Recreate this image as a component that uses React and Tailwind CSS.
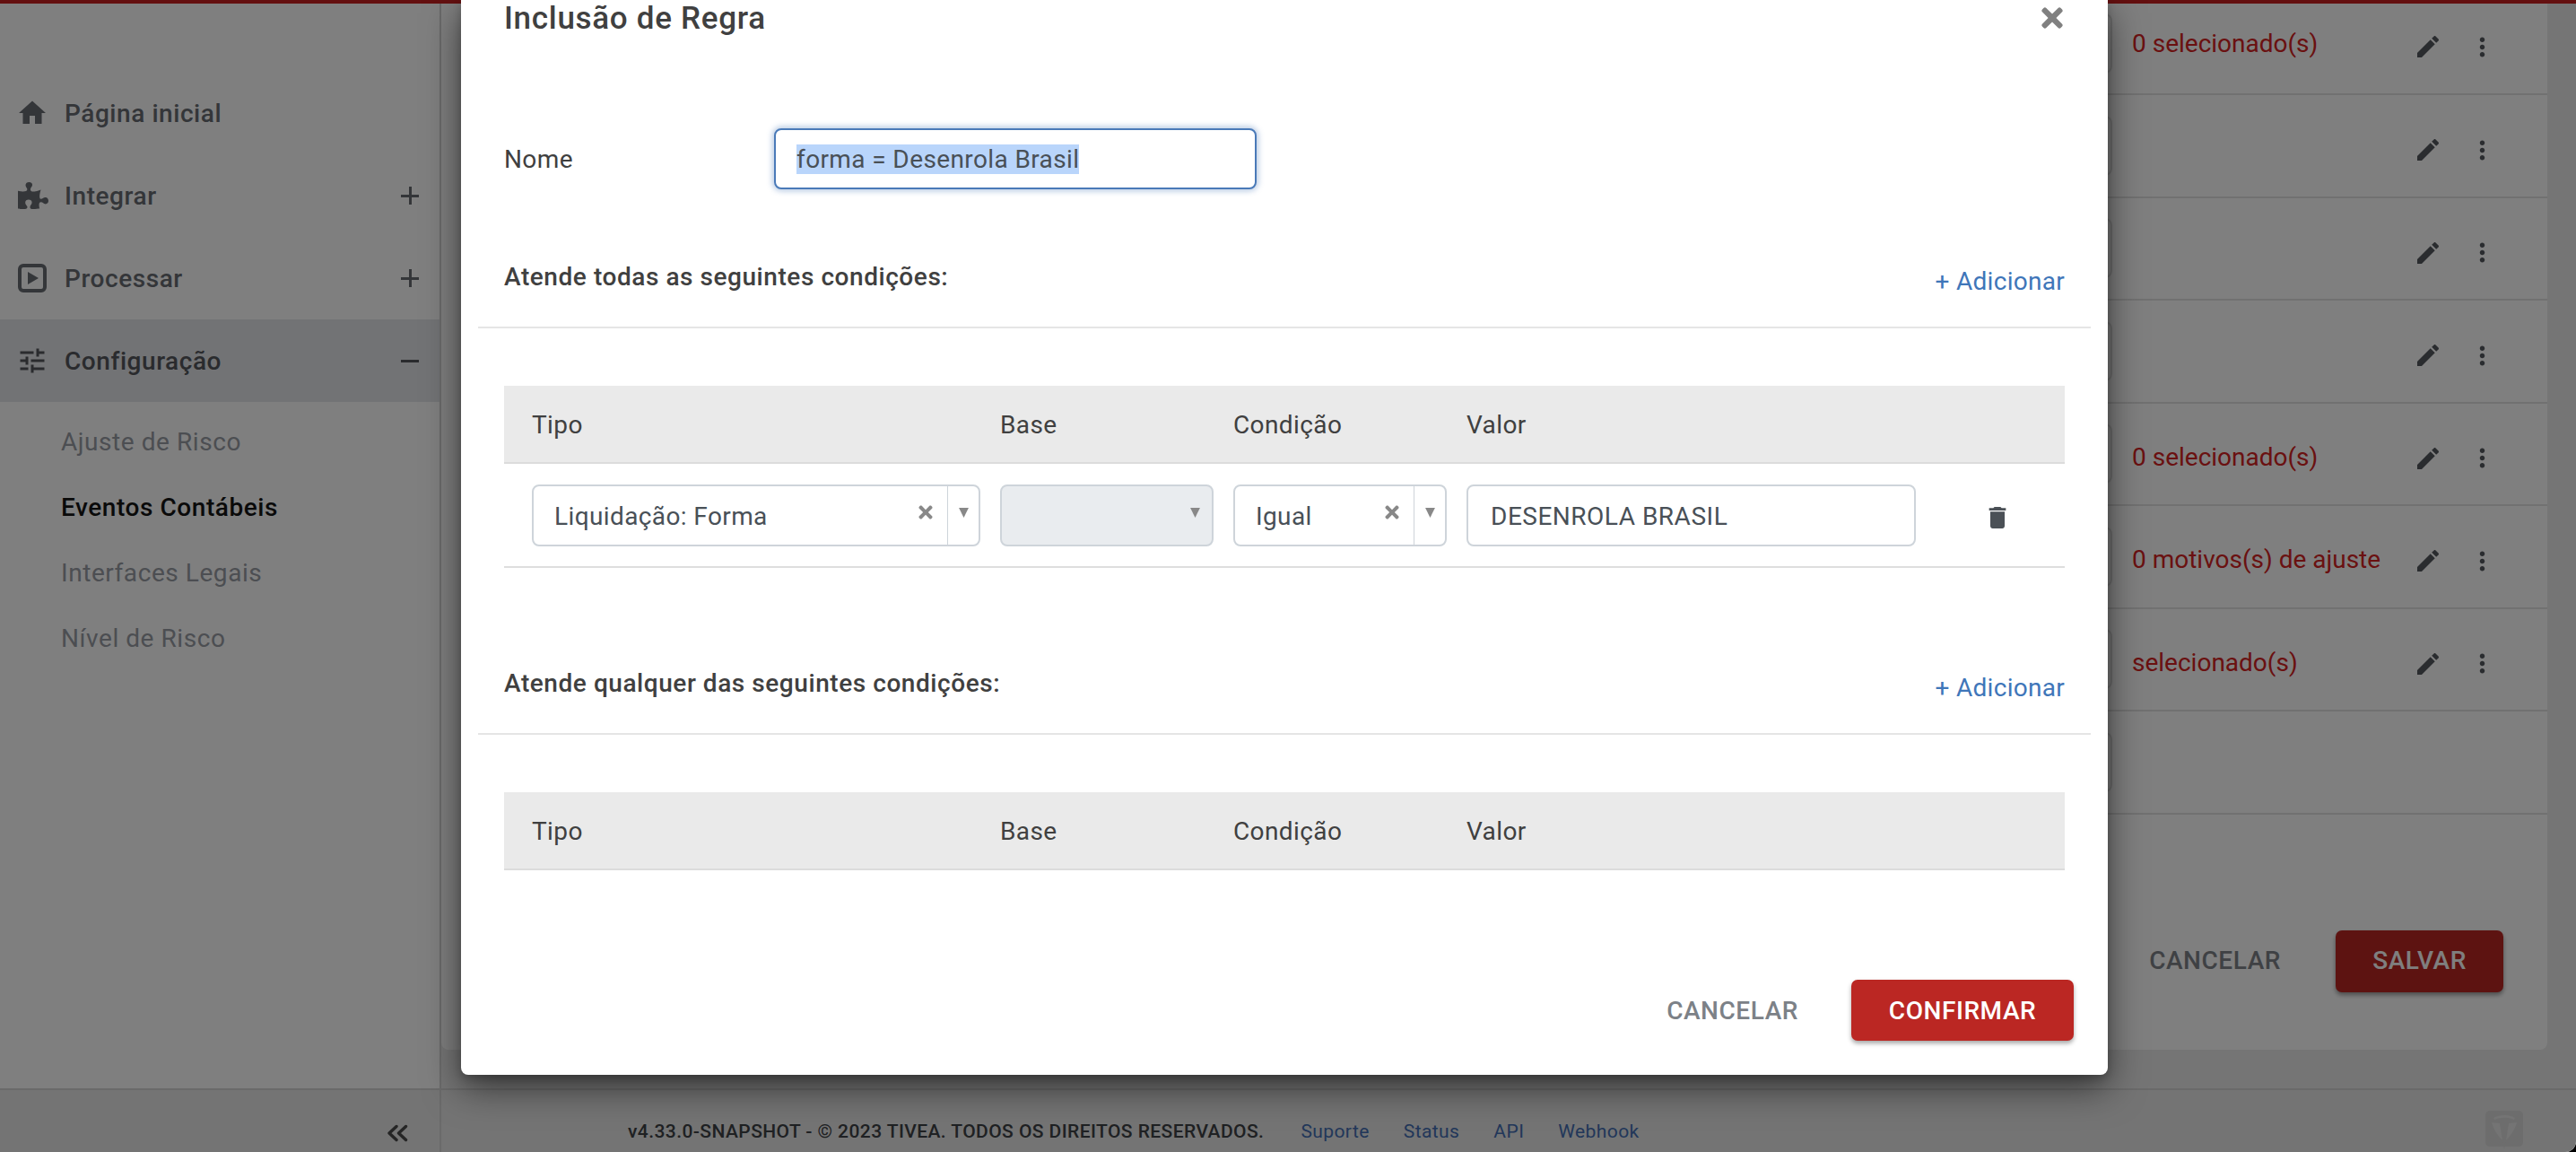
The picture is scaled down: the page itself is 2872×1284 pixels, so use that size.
import React from "react";
import { FaPuzzlePiece, FaTimes } from "react-icons/fa";

const Mat = ({ d, size, className = "" }) => (
  <svg viewBox="0 0 24 24" width={size} height={size} fill="currentColor" className={"shrink-0 " + className}>
    <path d={d} />
  </svg>
);
const HOME = "M10 20v-6h4v6h5v-8h3L12 3 2 12h3v8z";
const TUNE = "M3 17v2h6v-2H3zM3 5v2h10V5H3zm10 16v-2h8v-2h-8v-2h-2v6h2zM7 9v2H3v2h4v2h2V9H7zm14 4v-2H11v2h10zm-6-4h2V7h4V5h-4V3h-2v6z";
const EDIT = "M3 17.25V21h3.75L17.81 9.94l-3.75-3.75L3 17.25zM20.71 7.04c.39-.39.39-1.02 0-1.41l-2.34-2.34c-.39-.39-1.02-.39-1.41 0l-1.83 1.83 3.75 3.75 1.83-1.83z";
const MORE = "M12 8c1.1 0 2-.9 2-2s-.9-2-2-2-2 .9-2 2 .9 2 2 2zm0 2c-1.1 0-2 .9-2 2s.9 2 2 2 2-.9 2-2-.9-2-2-2zm0 6c-1.1 0-2 .9-2 2s.9 2 2 2 2-.9 2-2-.9-2-2-2z";
const TRASH = "M6 19c0 1.1.9 2 2 2h8c1.1 0 2-.9 2-2V7H6v12zM19 4h-3.5l-1-1h-5l-1 1H5v2h14V4z";

const PlayBox = () => (
  <svg viewBox="0 0 32 32" width="32" height="32" className="shrink-0">
    <rect x="2" y="2" width="28" height="28" rx="4" fill="none" stroke="currentColor" strokeWidth="4" />
    <path d="M11 9l12 7-12 7z" fill="currentColor" />
  </svg>
);

const Arrow = () => (
  <svg viewBox="0 0 10 12" width="11" height="13" className="shrink-0 text-[#888888]" fill="currentColor">
    <path d="M0 1h10L5 11z" />
  </svg>
);

const DoubleChevron = () => (
  <svg viewBox="0 0 24 20" width="24" height="20" fill="none" stroke="currentColor" strokeWidth="3.4" strokeLinecap="round" strokeLinejoin="round" className="shrink-0">
    <path d="M11 2.5L3 10l8 7.5" />
    <path d="M21.5 2.5L13.5 10l8 7.5" />
  </svg>
);

const Logo = () => (
  <svg viewBox="0 0 42 44" width="42" height="44" className="shrink-0">
    <rect x="0" y="0" width="42" height="40" rx="5" fill="#dadada" />
    <path d="M9 8c7-4 17-4 24 0l-1 2c-7-3-15-3-22 0z" fill="#e8e8e8" />
    <path d="M7 13l9 1 3 19c-5-5-10-12-12-20zM35 13l-9 1-3 19c5-5 10-12 12-20z" fill="#e8e8e8" />
    <path d="M19 34h4l-2 9z" fill="#dadada" />
  </svg>
);

const NavItem = ({ icon, label, sign, active }) => (
  <div className={"flex h-[92px] items-center pl-[20px] pr-[23px] " + (active ? "bg-[#e4e6ea] text-[#55575c]" : "text-[#686c73]")}>
    <div className="flex w-[52px] shrink-0 items-center justify-start">{icon}</div>
    <span className="flex-1 pt-[2px] text-[28px] font-medium tracking-[0.02em]">{label}</span>
    {sign === "+" && <span className="relative block h-[20px] w-[20px] before:absolute before:left-0 before:top-[9px] before:h-[3px] before:w-[20px] before:bg-current after:absolute after:left-[9px] after:top-0 after:h-[20px] after:w-[3px] after:bg-current" />}
    {sign === "-" && <span className="block h-[3px] w-[20px] bg-current" />}
  </div>
);

const SubItem = ({ label, active }) => (
  <div className={"flex h-[73px] items-center pl-[68px] text-[28px] tracking-[0.02em] " + (active ? "font-medium text-[#151515]" : "text-[#989ca4]")}>{label}</div>
);

const Sidebar = () => (
  <aside className="flex w-[492px] shrink-0 flex-col border-r-2 border-[#d4d4d4] bg-white pt-[76px]">
    <NavItem label="Página inicial" icon={<Mat d={HOME} size={36} className="-ml-[2px]" />} />
    <NavItem label="Integrar" sign="+" icon={<FaPuzzlePiece size={34} className="shrink-0" />} />
    <NavItem label="Processar" sign="+" icon={<PlayBox />} />
    <NavItem label="Configuração" sign="-" active icon={<Mat d={TUNE} size={36} className="-ml-[2px]" />} />
    <div className="pt-[8px]">
      <SubItem label="Ajuste de Risco" />
      <SubItem label="Eventos Contábeis" active />
      <SubItem label="Interfaces Legais" />
      <SubItem label="Nível de Risco" />
    </div>
  </aside>
);

const BgRow = ({ text, first, blank }) => (
  <div className={"flex items-center border-b-2 border-[#e2e2e2] pr-[56px] " + (first ? "h-[102px]" : "h-[114.5px]")}>
    <div className={"flex h-[67px] w-[1563px] shrink-0 rounded-lg border-2 border-[#e0e0e0] " + (first ? "-translate-y-[6px]" : "")} />
    <div className={"ml-[22px] flex-1 truncate text-[28px] text-[#d42222] " + (first ? "-translate-y-[5px]" : "translate-y-[4px]")}>{text}</div>
    {!blank && <Mat d={EDIT} size={32} className={"mr-[28px] text-[#55595f] " + (first ? "-translate-y-[2px]" : "translate-y-[5px]")} />}
    {!blank && <Mat d={MORE} size={33} className={"text-[#55595f] " + (first ? "-translate-y-[2px]" : "translate-y-[5px]")} />}
  </div>
);

const Main = () => (
  <main className="flex-1 overflow-hidden bg-[#eaeaea] pr-[32px]">
    <div className="h-[1166px] overflow-hidden rounded-b-lg bg-white pl-[300px]">
      <div>
        <BgRow first text="0 selecionado(s)" />
        <BgRow text="" />
        <BgRow text="" />
        <BgRow text="" />
        <BgRow text="0 selecionado(s)" />
        <BgRow text="0 motivos(s) de ajuste" />
        <BgRow text="selecionado(s)" />
        <BgRow text="" blank />
      </div>
      <div className="flex items-center justify-end gap-[61px] pr-[49px] pt-[129px]">
        <span className="text-[28px] font-medium uppercase tracking-[0.02em] text-[#7e8389]">Cancelar</span>
        <span className="flex h-[69px] w-[187px] items-center justify-center rounded-[7px] bg-[#bb2723] text-[28px] font-medium uppercase tracking-[0.02em] text-white shadow-[0_3px_5px_rgba(0,0,0,0.4)]">Salvar</span>
      </div>
    </div>
  </main>
);

const Footer = () => (
  <footer className="flex h-[71px] items-center border-t-2 border-[#d4d4d4] bg-[#e8e8e8]">
    <div className="flex h-full w-[492px] shrink-0 items-center justify-end border-r-2 border-[#d4d4d4] pr-[35px] pt-[26px] text-[#4a4a4a]">
      <DoubleChevron />
    </div>
    <div className="flex flex-1 items-center pl-[208px] text-[21px] tracking-[0.02em]">
      <span className="whitespace-nowrap pt-[24px] font-medium text-[#3e4246]">v4.33.0-SNAPSHOT - © 2023 TIVEA. TODOS OS DIREITOS RESERVADOS.</span>
      <div className="ml-[41px] flex gap-[38px] pt-[24px] text-[#446fb4]">
        <span>Suporte</span>
        <span>Status</span>
        <span>API</span>
        <span>Webhook</span>
      </div>
      <div className="ml-auto mr-[59px] pt-[20px]"><Logo /></div>
    </div>
  </footer>
);

const Select = ({ value, clear, disabled }) => (
  <div className={"flex h-[69px] items-center rounded-lg border-2 border-[#ced4da] " + (disabled ? "bg-[#e9ecef]" : "bg-white")}>
    <span className="flex-1 pl-[23px] pt-[3px] text-[28px] tracking-[0.014em] text-[#495057]">{value}</span>
    {clear && <FaTimes size={22} className="mr-[13px] -translate-y-[3px] text-[#888888]" />}
    {clear && <span className="h-full w-[1px] bg-[#ced4da]" />}
    <span className={"flex items-center justify-center -translate-y-[3px] " + (clear ? "w-[34px]" : "mr-[14px] w-[10px]")}><Arrow /></span>
  </div>
);

const COLS = "grid grid-cols-[500px_238px_238px_501px_1fr] gap-x-[22px] px-[31px]";

const Head = () => (
  <div className={COLS + " h-[87px] items-center border-b-2 border-[#dcdcdc] bg-[#eaeaea] pt-[2px] text-[28px] tracking-[0.014em] text-[#404040]"}>
    <span>Tipo</span>
    <span>Base</span>
    <span>Condição</span>
    <span>Valor</span>
  </div>
);

const Section = ({ title }) => (
  <div className="flex h-[96px] items-center border-b-2 border-[#e5e5e5] px-[29px] pb-[16px]">
    <span className="flex-1 text-[28px] font-medium tracking-[0.02em] text-[#404040]">{title}</span>
    <span className="translate-y-[5px] text-[28px] tracking-[0.01em] text-[#3f76b9]">+ Adicionar</span>
  </div>
);

const Modal = () => (
  <div className="absolute left-[514px] top-0 flex h-[1198px] w-[1836px] flex-col rounded-b-lg bg-white shadow-[0_14px_40px_rgba(0,0,0,0.55),0_4px_10px_rgba(0,0,0,0.2)]">
    <div className="flex h-[40px] items-center justify-between pl-[48px] pr-[45px]">
      <span className="text-[35px] font-medium leading-none tracking-[0.02em] text-[#404040]">Inclusão de Regra</span>
      <FaTimes size={34} className="text-[#808080]" />
    </div>
    <div className="h-[103px]" />
    <div className="flex h-[68px] items-center pl-[48px]">
      <label className="w-[301px] pt-[2px] text-[28px] tracking-[0.014em] text-[#404040]">Nome</label>
      <div className="flex h-[68px] w-[538px] items-center rounded-lg border-2 border-[#4a7ab8] bg-white pl-[23px] shadow-[0_0_6px_2px_rgba(74,122,184,0.4)]">
        <span className="bg-[#b9d5fb] text-[28px] leading-[33px] tracking-[0.014em] text-[#495057]">forma = Desenrola Brasil</span>
      </div>
    </div>
    <div className="mx-[19px] mt-[59px]"><Section title="Atende todas as seguintes condições:" /></div>
    <div className="mx-[48px] mt-[64px]">
      <Head />
      <div className={COLS + " h-[116px] items-center border-b-2 border-[#dedede]"}>
        <Select value="Liquidação: Forma" clear />
        <Select disabled />
        <Select value="Igual" clear />
        <div className="flex h-[69px] items-center rounded-lg border-2 border-[#ced4da] pl-[25px] pt-[3px] text-[28px] tracking-[0.018em] text-[#495057]">DESENROLA BRASIL</div>
        <div className="flex translate-y-[3px] justify-center pl-[24px]"><Mat d={TRASH} size={32} className="text-[#4b5056]" /></div>
      </div>
    </div>
    <div className="mx-[19px] mt-[90px]"><Section title="Atende qualquer das seguintes condições:" /></div>
    <div className="mx-[48px] mt-[64px]"><Head /></div>
    <div className="mt-auto flex items-center justify-end gap-[59px] pb-[38px] pr-[38px]">
      <span className="pt-[2px] text-[28px] font-medium uppercase tracking-[0.02em] text-[#7c8187]">Cancelar</span>
      <span className="flex h-[68px] w-[248px] items-center justify-center rounded-[7px] bg-[#bb2723] pt-[2px] text-[28px] font-medium uppercase tracking-[0.02em] text-white shadow-[0_3px_5px_rgba(0,0,0,0.35)]">Confirmar</span>
    </div>
  </div>
);

export default function App() {
  return (
    <div className="h-[1284px] w-[2872px] overflow-hidden bg-black">
      <div className="relative flex h-full w-full flex-col overflow-hidden rounded-br-[12px] bg-white font-[Roboto,sans-serif]">
        <div className="h-[4px] shrink-0 bg-[#c82020]" />
        <div className="flex min-h-0 flex-1">
          <Sidebar />
          <Main />
        </div>
        <Footer />
        <div className="absolute inset-0 bg-black/50" />
        <Modal />
      </div>
    </div>
  );
}
